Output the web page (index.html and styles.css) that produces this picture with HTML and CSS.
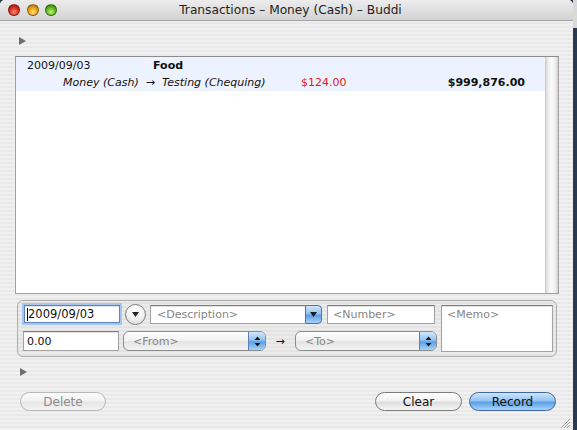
FILE: index.html
```html
<!DOCTYPE html>
<html>
<head>
<meta charset="utf-8">
<link rel="stylesheet" href="styles.css">
</head>
<body>
<div class="window">
  <div class="titlebar">
    <div class="lights">
      <span class="light red"></span>
      <span class="light amber"></span>
      <span class="light green"></span>
    </div>
    <div class="title">Transactions – Money (Cash) – Buddi</div>
    <div></div>
  </div>
  <div class="content">
    <div class="disclosure"><svg width="7" height="8" viewBox="0 0 7 8"><path d="M0 0 L7 4 L0 8 Z" fill="#6e6e6e"/></svg></div>
    <div class="listbox">
      <div class="table">
        <div class="row selected">
          <div class="line1"><span class="date">2009/09/03</span><span class="desc">Food</span></div>
          <div class="line2"><span class="accounts"><span>Money (Cash)</span><span class="to-arrow">→</span><span>Testing (Chequing)</span></span><span class="amount">$124.00</span><span class="balance">$999,876.00</span></div>
        </div>
      </div>
      <div class="scrollbar"></div>
    </div>
    <div class="editor">
      <div class="fields">
        <div class="frow">
          <div class="field date-field"><span class="caret"></span>2009/09/03</div>
          <div class="circle-btn"><svg width="7" height="5" viewBox="0 0 7 5"><path d="M0 0 L7 0 L3.5 5 Z" fill="#222"/></svg></div>
          <div class="combo">
            <div class="field combo-text placeholder">&lt;Description&gt;</div>
            <div class="combo-btn"><svg width="7" height="5" viewBox="0 0 7 5"><path d="M0 0 L7 0 L3.5 5 Z" fill="#1a1a1a"/></svg></div>
          </div>
          <div class="field number-field placeholder">&lt;Number&gt;</div>
        </div>
        <div class="frow">
          <div class="field amount-field">0.00</div>
          <div class="popup from-popup">
            <span class="popup-label">&lt;From&gt;</span>
            <span class="stepper"><svg width="7" height="11" viewBox="0 0 7 11"><path d="M0.5 4 L3.5 0.5 L6.5 4 Z M0.5 7 L3.5 10.5 L6.5 7 Z" fill="#1a1a1a"/></svg></span>
          </div>
          <div class="arrow">→</div>
          <div class="popup to-popup">
            <span class="popup-label">&lt;To&gt;</span>
            <span class="stepper"><svg width="7" height="11" viewBox="0 0 7 11"><path d="M0.5 4 L3.5 0.5 L6.5 4 Z M0.5 7 L3.5 10.5 L6.5 7 Z" fill="#1a1a1a"/></svg></span>
          </div>
        </div>
      </div>
      <div class="field memo-field placeholder">&lt;Memo&gt;</div>
    </div>
    <div class="disclosure second"><svg width="7" height="8" viewBox="0 0 7 8"><path d="M0 0 L7 4 L0 8 Z" fill="#6e6e6e"/></svg></div>
    <div class="buttons">
      <div class="btn disabled">Delete</div>
      <div class="btn clear">Clear</div>
      <div class="btn primary">Record</div>
    </div>
  </div>
  <svg class="grip" width="9" height="9" viewBox="0 0 9 9"><path d="M9 0 L0 9 M9 3 L3 9 M9 6 L6 9" stroke="#9a9a9a" stroke-width="1"/><path d="M9 1 L1 9 M9 4 L4 9 M9 7 L7 9" stroke="#fafafa" stroke-width="1"/></svg>
</div>
<div class="side">
  <div class="side-top"></div>
  <div class="side-rest"></div>
</div>
</body>
</html>
```

FILE: styles.css
```css
* { box-sizing: border-box; }
html, body { margin: 0; padding: 0; }
body {
  width: 577px;
  height: 430px;
  overflow: hidden;
  display: flex;
  background: #2b3a4e;
  font-family: "DejaVu Sans", "Liberation Sans", sans-serif;
  font-size: 11px;
  color: #111;
}
.window {
  width: 573px;
  height: 430px;
  position: relative;
  display: flex;
  flex-direction: column;
  border-radius: 5px 5px 0 0;
  overflow: hidden;
  background: repeating-linear-gradient(to bottom, #f1f1f1 0px, #f1f1f1 2px, #e9e9e9 2px, #e9e9e9 4px);
}
.side { width: 4px; display: flex; flex-direction: column; }
.side-top { height: 28px; background: #d9d9d9; }
.side-rest { flex: 1; background: #2b3a4e; }

.titlebar {
  height: 21px;
  flex: none;
  display: grid;
  grid-template-columns: 1fr auto 1fr;
  align-items: center;
  background: linear-gradient(#ececec, #d3d3d3);
  border-bottom: 1px solid #a4a4a4;
  padding-left: 8px;
}
.lights { display: flex; gap: 6.5px; }
.light {
  width: 12px; height: 12px; border-radius: 50%;
  border: 1px solid rgba(0,0,0,0.35);
}
.red { background: radial-gradient(circle at 50% 70%, #ff8a7a 0%, #d42a1c 55%, #8e150c 100%); }
.amber { background: radial-gradient(circle at 50% 70%, #ffe07a 0%, #e39a12 55%, #97600a 100%); }
.green { background: radial-gradient(circle at 50% 70%, #c6f27a 0%, #55b21a 55%, #2f700c 100%); }
.title {
  font-size: 12.2px;
  color: #1e1e1e;
  white-space: nowrap;
  padding-bottom: 1px;
}

.content {
  flex: 1;
  display: flex;
  flex-direction: column;
  padding: 16px 17px 0 15px;
}
.disclosure { height: 8px; margin-left: 4px; display: flex; }
.disclosure.second { margin-top: 11px; margin-left: 5px; }

.listbox {
  margin-top: 11px;
  width: 544px;
  height: 238px;
  border: 1px solid #a0a0a0;
  border-top-color: #8c8c8c;
  background: #fff;
  display: flex;
}
.table { flex: 1; }
.scrollbar {
  width: 13px;
  background: linear-gradient(to right, #c4c4c4 0px, #e6e6e6 2px, #fbfbfb 6px, #efefef 10px, #d2d2d2 13px);
}
.row.selected { background: #edf3fe; }
.line1, .line2 { height: 17px; display: flex; align-items: center; white-space: nowrap; }
.line1 { padding-left: 11px; }
.line1 .date { width: 126px; }
.line1 .desc { font-weight: bold; }
.line2 { padding-left: 47px; padding-right: 20px; }
.accounts { width: 238px; font-style: italic; display: flex; align-items: center; }
.to-arrow { font-style: normal; margin: 0 7px 0 7px; }
.amount { color: #e8171c; }
.balance { margin-left: auto; font-weight: bold; }

.editor {
  margin-top: 6px;
  margin-left: 2px;
  width: 540px;
  height: 57px;
  border: 1px solid #adadad;
  border-radius: 6px;
  background: rgba(0,0,0,0.025);
  padding: 2px 3px 5px 4px;
  display: flex;
  gap: 4px;
}
.fields { width: 415px; display: flex; flex-direction: column; gap: 6px; }
.frow { display: flex; align-items: center; }
.frow:first-child { height: 22px; }
.frow:last-child { height: 20px; }

.field {
  background: #fff;
  border: 1px solid #a2a2a2;
  border-top-color: #7c7c7c;
  box-shadow: inset 0 1px 1px rgba(0,0,0,0.12);
  height: 19px;
  display: flex;
  align-items: center;
  padding-left: 3px;
  white-space: nowrap;
}
.placeholder { color: #858585; }
.date-field {
  width: 96px;
  height: 18px;
  margin-left: 2px;
  border: 1px solid #5d85bd;
  box-shadow: 0 0 0 2px #a6c5ec, inset 0 1px 1px rgba(0,0,0,0.12);
  font-size: 11.5px;
  padding-left: 2px;
}
.caret { width: 1px; height: 13px; background: #000; }
.circle-btn {
  width: 21px; height: 21px;
  margin-left: 5px;
  border-radius: 50%;
  border: 1px solid #7d7d7d;
  background: radial-gradient(circle at 50% 30%, #ffffff 0%, #f3f3f3 50%, #d3d3d3 100%);
  display: flex; align-items: center; justify-content: center;
}
.combo { display: flex; margin-left: 4px; width: 172px; height: 19px; }
.combo-text { flex: 1; border-right: none; padding-left: 6px; }
.combo-btn {
  width: 17px; height: 19px;
  border: 1px solid #4d73a9;
  border-radius: 0 4px 4px 0;
  background: linear-gradient(#d2e6fa 0%, #92c3f2 45%, #5d9fe4 55%, #a6d2f8 100%);
  display: flex; align-items: center; justify-content: center;
}
.number-field { width: 108px; margin-left: 5px; padding-left: 5px; }

.amount-field { width: 96px; height: 20px; margin-left: 1px; }
.popup {
  height: 20px;
  border: 1px solid #8b8b8b;
  border-radius: 6px;
  background: linear-gradient(#ffffff 0%, #f1f1f1 48%, #e3e3e3 52%, #f4f4f4 100%);
  display: flex;
  align-items: center;
  overflow: hidden;
}
.from-popup { width: 143px; margin-left: 4px; }
.to-popup { width: 142px; }
.popup-label { flex: 1; color: #858585; padding-left: 9px; }
.stepper {
  width: 17px; height: 100%;
  border-left: 1px solid #5c80b5;
  background: linear-gradient(#d2e6fa 0%, #92c3f2 45%, #5d9fe4 55%, #a6d2f8 100%);
  display: flex; align-items: center; justify-content: center;
}
.arrow { width: 29px; text-align: center; font-size: 11px; padding-right: 1px; }
.memo-field {
  width: 112px;
  height: 47px;
  margin-top: 2px;
  align-items: flex-start;
  padding-top: 2px;
  padding-left: 5px;
}

.buttons {
  margin-top: 16px;
  display: flex;
  gap: 7px;
}
.btn {
  width: 87px;
  height: 19px;
  border-radius: 10px;
  border: 1px solid #7c7c7c;
  background: linear-gradient(#fefefe 0%, #f3f3f3 45%, #dedede 55%, #f6f6f6 100%);
  display: flex; align-items: center; justify-content: center;
  font-size: 12px;
  color: #111;
}
.btn.disabled {
  width: 86px;
  margin-left: 5px;
  border-color: #b8b8b8;
  color: #8c8c8c;
  background: linear-gradient(#fbfbfb 0%, #f2f2f2 45%, #e6e6e6 55%, #f4f4f4 100%);
}
.btn.clear { margin-left: auto; }
.btn.primary {
  border-color: #41679c;
  background: linear-gradient(#cfe4fa 0%, #93c4f3 45%, #5c9fe6 55%, #a9d5fa 100%);
}
.grip { position: absolute; right: 3px; bottom: 2px; }
```
